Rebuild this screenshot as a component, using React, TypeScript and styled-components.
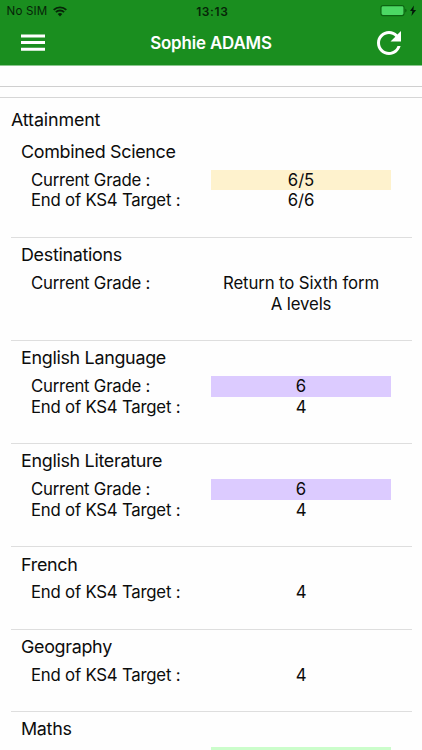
import React from "react";
import styled, { createGlobalStyle } from "styled-components";

const GlobalStyle = createGlobalStyle`
  * { box-sizing: border-box; }
  body {
    margin: 0;
    background: #fff;
    color: #0c0c0c;
    font-family: Inter, "Liberation Sans", sans-serif;
    overflow: hidden;
  }
`;

const Screen = styled.div`
  display: flex;
  flex-direction: column;
  height: 750px;
  overflow: hidden;
  background: #fefefe;
`;

const Header = styled.header`
  height: 66px;
  flex: none;
  background: #1a8e1f;
  border-bottom: 1px solid #8cc68f;
`;

const StatusBar = styled.div`
  display: grid;
  grid-template-columns: 1fr auto 1fr;
  align-items: center;
  height: 21px;
  padding: 1px 5px 0 6.5px;
  color: #072508;
  font-size: 11.6px;
`;

const Carrier = styled.div`
  display: flex;
  align-items: center;
  gap: 6px;
  letter-spacing: 0.15px;
`;

const Clock = styled.div`
  font-weight: 600;
  font-size: 12px;
  letter-spacing: 0.6px;
  padding-left: 1px;
`;

const Power = styled.div`
  display: flex;
  justify-content: flex-end;
`;

const NavBar = styled.nav`
  display: grid;
  grid-template-columns: 1fr auto 1fr;
  align-items: center;
  height: 44px;
  padding: 0 21px 0 21px;
`;

const NavTitle = styled.h1`
  margin: 0;
  color: #fff;
  font-size: 16.9px;
  font-weight: 600;
  letter-spacing: -0.15px;
`;

const IconButton = styled.button<{ $end?: boolean }>`
  display: flex;
  padding: 0;
  border: 0;
  background: none;
  justify-self: ${(p) => (p.$end ? "end" : "start")};
`;

const Strip = styled.div<{ $height: number; $tone: string }>`
  flex: none;
  height: ${(p) => p.$height}px;
  border-bottom: 1px solid ${(p) => p.$tone};
`;

const Report = styled.main`
  flex: 1;
  min-height: 0;
  overflow: hidden;
  padding: 0 10px 0 11px;
`;

const GroupTitle = styled.h2`
  margin: 0;
  height: 36.8px;
  padding-top: 11px;
  font-size: 17.9px;
  font-weight: 400;
  line-height: 22px;
  letter-spacing: -0.15px;
`;

const Subject = styled.section`
  padding: 0 0 26.8px 10px;
  background: linear-gradient(#dedede, #dedede) 0 100% / 100% 1px no-repeat;
`;

const SubjectTitle = styled.h3`
  margin: 0;
  height: 35.1px;
  padding-top: 6.4px;
  font-size: 17.9px;
  font-weight: 400;
  line-height: 22px;
  letter-spacing: -0.3px;
`;

const GradeRow = styled.div`
  display: grid;
  grid-template-columns: 180px 180px;
  min-height: 20.6px;
  padding-left: 10px;
  font-size: 16.8px;
  line-height: 20.6px;
`;

const Label = styled.span`
  letter-spacing: -0.23px;
`;

const Value = styled.span<{ $fill?: string }>`
  background: ${(p) => p.$fill ?? "transparent"};
  text-align: center;
  white-space: pre-line;
  letter-spacing: -0.13px;
`;

type Grade = { label?: string; value?: string; fill?: string };

const subjects: { name: string; grades: Grade[] }[] = [
  {
    name: "Combined Science",
    grades: [
      { label: "Current Grade :", value: "6/5", fill: "#fef2cd" },
      { label: "End of KS4 Target :", value: "6/6" },
    ],
  },
  { name: "Destinations", grades: [{ label: "Current Grade :", value: "Return to Sixth form\nA levels" }] },
  {
    name: "English Language",
    grades: [
      { label: "Current Grade :", value: "6", fill: "#dccbff" },
      { label: "End of KS4 Target :", value: "4" },
    ],
  },
  {
    name: "English Literature",
    grades: [
      { label: "Current Grade :", value: "6", fill: "#dccbff" },
      { label: "End of KS4 Target :", value: "4" },
    ],
  },
  { name: "French", grades: [{ label: "End of KS4 Target :", value: "4" }] },
  { name: "Geography", grades: [{ label: "End of KS4 Target :", value: "4" }] },
  { name: "Maths", grades: [{ fill: "#cbfdcb" }] },
];

const WifiIcon = () => (
  <svg width="14" height="11" viewBox="0 0 14 11" fill="none" stroke="#072508" strokeWidth="1.9">
    <path d="M.7 3.9a9 9 0 0 1 12.6 0M2.9 6.2a5.8 5.8 0 0 1 8.2 0" />
    <path d="M7 10.5 4.7 8.1a3.3 3.3 0 0 1 4.6 0Z" fill="#072508" stroke="none" />
  </svg>
);

const BatteryIcon = () => (
  <svg width="37" height="12" viewBox="0 0 37 12">
    <rect x="1" y=".6" width="23" height="10" rx="2" fill="#4cd964" stroke="#0c6411" strokeWidth="1.1" />
    <path d="M25.2 3.8q1.4.3 1.4 1.8t-1.4 1.8Z" fill="#0c6411" />
    <path d="M33.9.6 30 6.1h2.4l-1 4.8L36.1 5h-2.7Z" fill="#04180a" />
  </svg>
);

const MenuIcon = () => (
  <svg width="24" height="18" viewBox="0 0 24 18" fill="#fff">
    <path d="M0 .5h24v3H0zM0 7.1h24v3H0zM0 13.8h24v3H0z" />
  </svg>
);

const RefreshIcon = () => (
  <svg width="24" height="24" viewBox="4 4 16 16" fill="#fff">
    <path d="M17.65 6.35C16.2 4.9 14.21 4 12 4c-4.42 0-7.99 3.58-7.99 8s3.57 8 7.99 8c3.73 0 6.84-2.55 7.73-6h-2.08c-.82 2.33-3.04 4-5.65 4-3.31 0-6-2.69-6-6s2.69-6 6-6c1.66 0 3.14.69 4.22 1.78L13 11h7V4l-2.35 2.35z" />
  </svg>
);

export default function App() {
  return (
    <Screen>
      <GlobalStyle />
      <Header>
        <StatusBar>
          <Carrier>
            No SIM <WifiIcon />
          </Carrier>
          <Clock>13:13</Clock>
          <Power>
            <BatteryIcon />
          </Power>
        </StatusBar>
        <NavBar>
          <IconButton aria-label="Menu">
            <MenuIcon />
          </IconButton>
          <NavTitle>Sophie ADAMS</NavTitle>
          <IconButton $end aria-label="Refresh">
            <RefreshIcon />
          </IconButton>
        </NavBar>
      </Header>
      <Strip $height={21} $tone="#cfcfcf" />
      <Strip $height={11} $tone="#d6d6d6" />
      <Report>
        <GroupTitle>Attainment</GroupTitle>
        {subjects.map((subject) => (
          <Subject key={subject.name}>
            <SubjectTitle>{subject.name}</SubjectTitle>
            {subject.grades.map((grade, index) => (
              <GradeRow key={index}>
                <Label>{grade.label}</Label>
                <Value $fill={grade.fill}>{grade.value}</Value>
              </GradeRow>
            ))}
          </Subject>
        ))}
      </Report>
    </Screen>
  );
}
